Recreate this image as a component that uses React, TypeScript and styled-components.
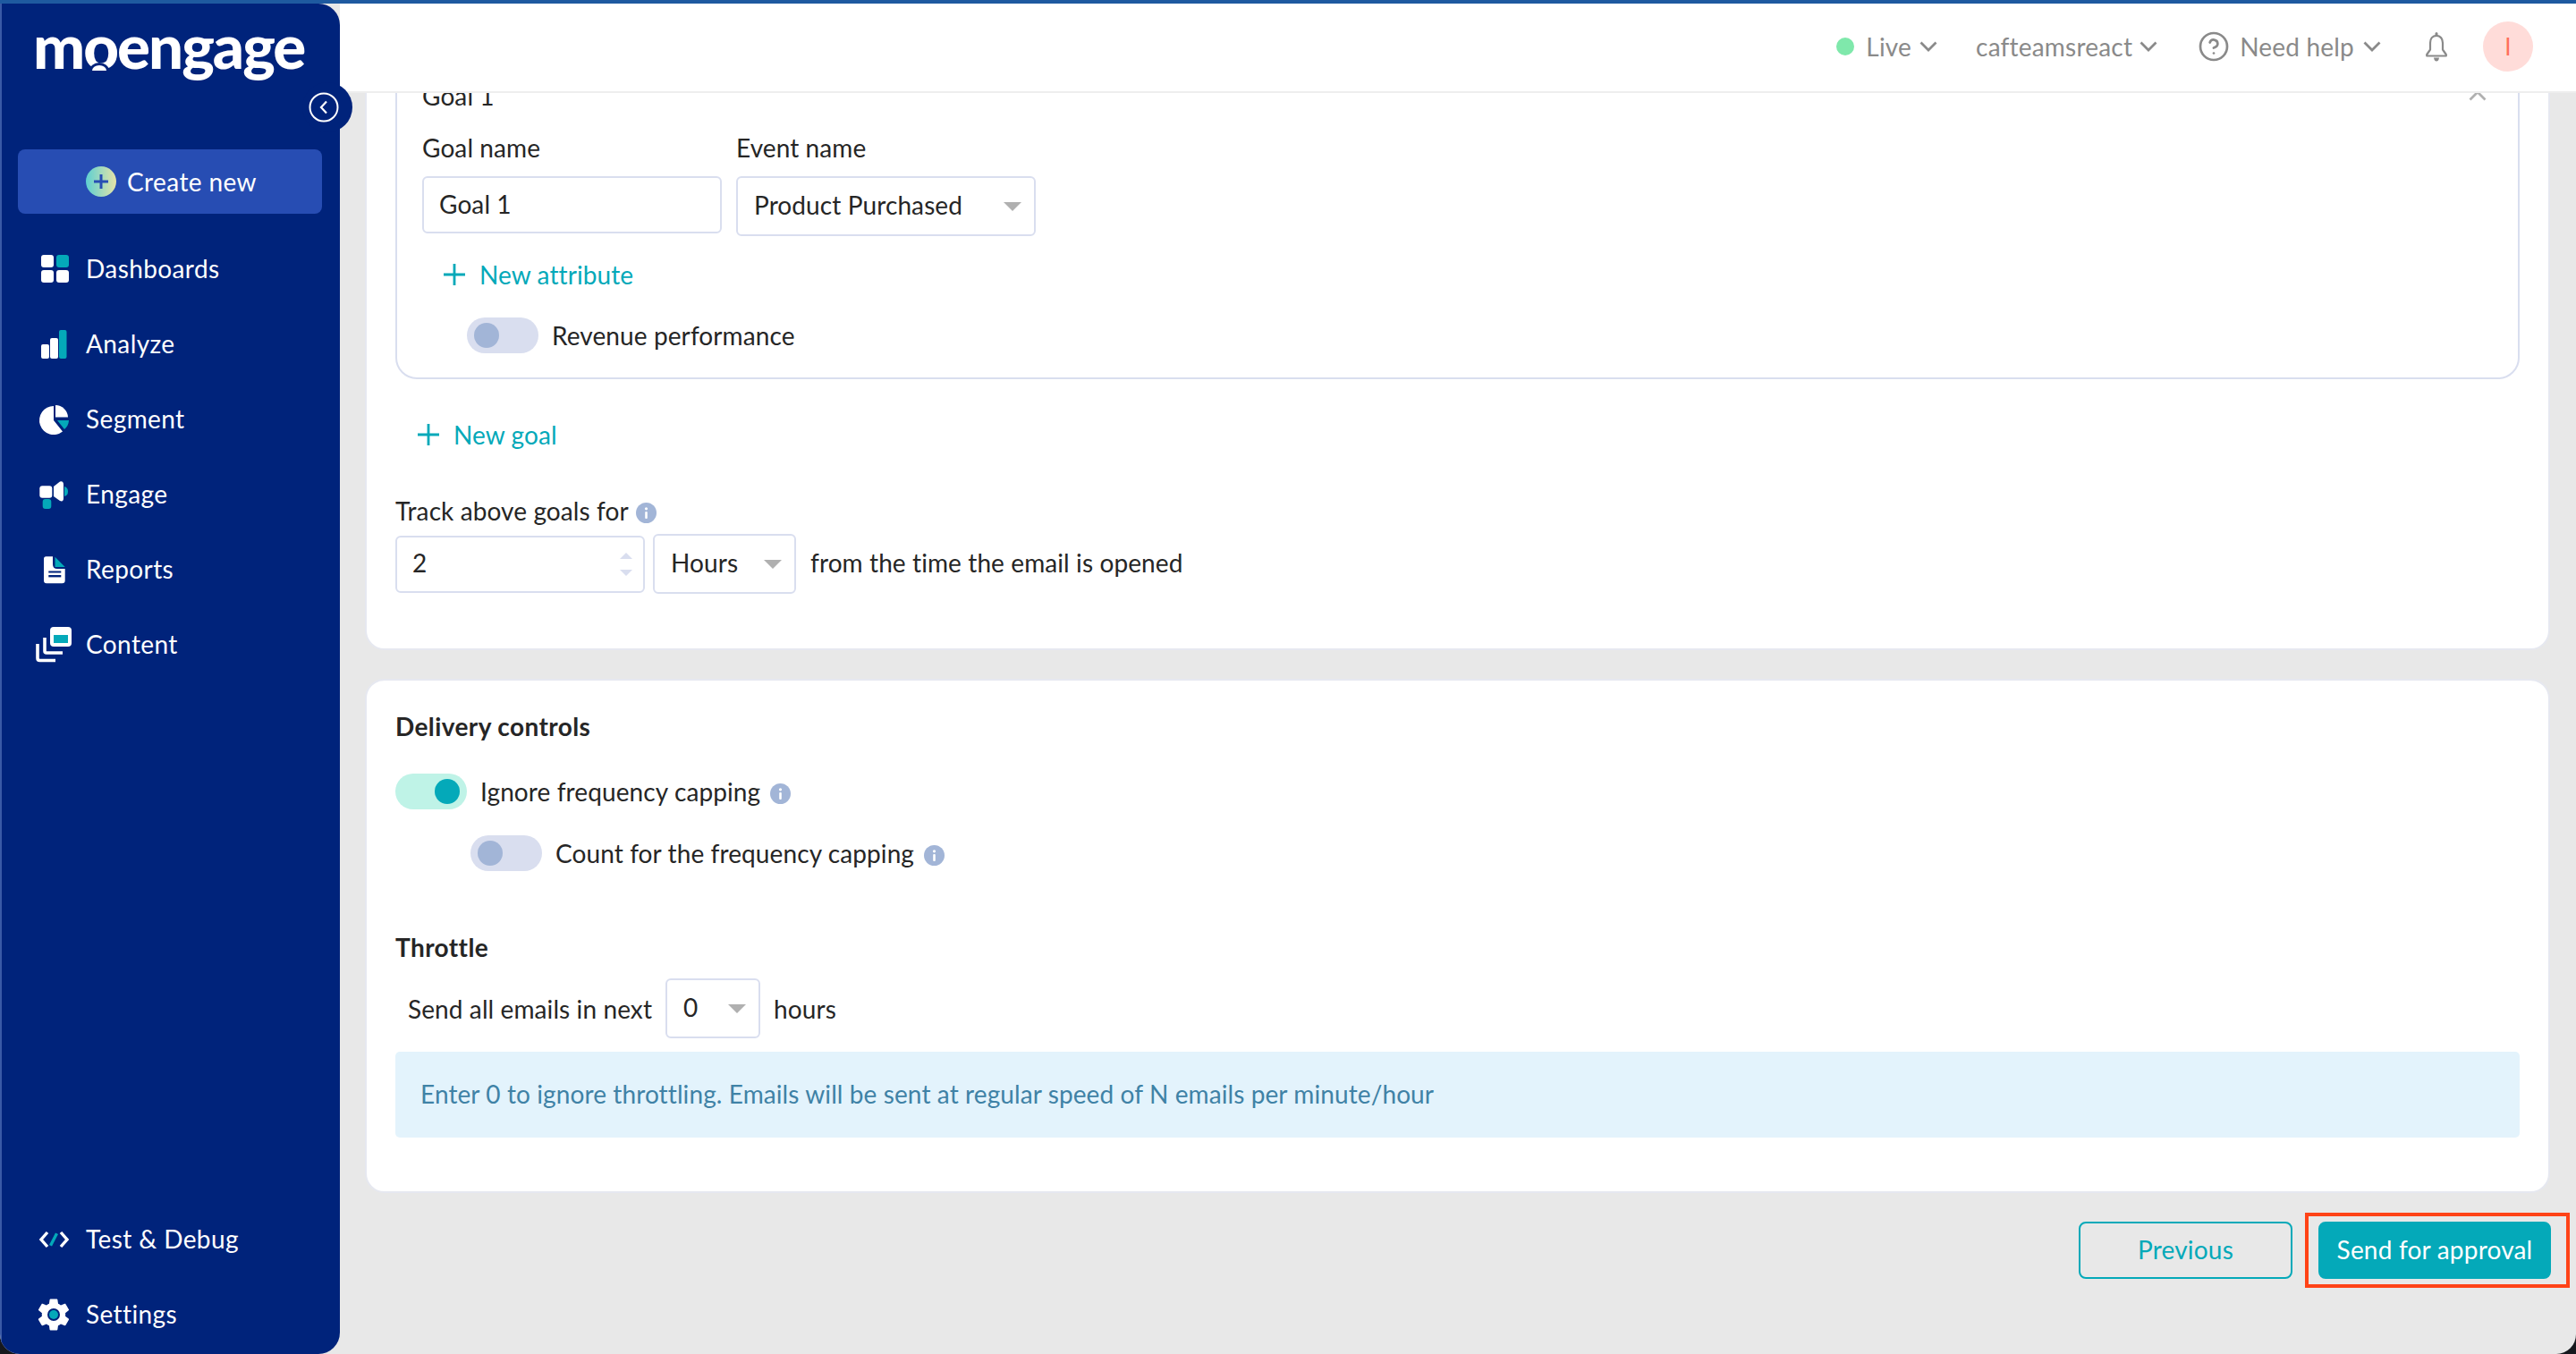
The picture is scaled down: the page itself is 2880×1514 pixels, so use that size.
import React from 'react';
import styled, { createGlobalStyle } from 'styled-components';
import { CircleHelp } from 'lucide-react';

const Global = createGlobalStyle`
  html, body { margin: 0; padding: 0; background: #16181d; }
  body { font-family: "Lato", "Liberation Sans", sans-serif; color: #262626; }
  * { box-sizing: border-box; }
`;

const teal = '#04a9b9';
const line = '#d9deef';
const navy = '#00237b';

const Shell = styled.div`
  width: 2880px; height: 1514px; display: flex; flex-direction: column;
  border-top: 4px solid #1e5aa0; overflow: hidden;
`;
const Window = styled.div`
  flex: 1; min-height: 0; display: flex; overflow: hidden;
  border-radius: 0 0 22px 22px; background: #e8e8e8;
`;
const Sidebar = styled.aside`
  width: 380px; flex: none; position: relative; z-index: 2;
  display: flex; flex-direction: column;
  background: ${navy}; border-left: 2px solid #3a5aa6;
  border-radius: 0 24px 24px 0; color: #fff; padding-bottom: 3px;
`;
const LogoArea = styled.div`
  height: 163px; flex: none; padding: 7px 0 0 35px;
`;
const Logo = styled.div`
  font-family: "Lato", sans-serif; font-weight: 900; font-size: 69px; line-height: 80px;
  letter-spacing: -2px; color: #fff; white-space: nowrap;
`;
const LogoO = styled.span`
  position: relative; display: inline-block;
  &::after {
    content: ''; position: absolute; left: 50%; margin-left: -9px; bottom: 12px; width: 16px; height: 6px;
    background: #fff; border-radius: 50% 50% 0 0 / 100% 100% 0 0;
    box-shadow: 0 0 0 3px ${navy};
  }
`;
const CollapseBump = styled.div`
  position: absolute; right: -14px; top: 88px; width: 56px; height: 56px; border-radius: 50%;
  background: ${navy}; display: flex; align-items: center; justify-content: center;
  padding-right: 8px;
`;
const CreateButton = styled.div`
  flex: none; width: 340px; height: 72px; margin-left: 18px; border-radius: 8px;
  background: #274db3; display: flex; align-items: center; justify-content: center; gap: 12px;
  font-size: 28px; letter-spacing: 0.4px; padding-left: 3px;
`;
const NavList = styled.nav<{ $bottom?: boolean }>`
  display: flex; flex-direction: column;
  margin-top: ${p => (p.$bottom ? 'auto' : '19px')};
`;
const NavRow = styled.div`
  height: 84px; display: flex; align-items: center; gap: 13px; padding-left: 37px;
  font-size: 28px; letter-spacing: 0.4px;
`;
const NavIcon = styled.svg`
  width: 44px; height: 44px; flex: none; overflow: visible;
`;

const Main = styled.main`
  flex: 1; min-width: 0; margin-left: -24px; padding-left: 24px;
  display: flex; flex-direction: column;
`;
const Header = styled.header`
  height: 100px; flex: none; background: #fff; border-bottom: 2px solid #eeeeee;
  display: flex; align-items: center; justify-content: flex-end; padding: 0 48px 2px 0;
  color: #8a8a8a; font-size: 28px; letter-spacing: 0.2px;
`;
const HeaderItem = styled.div<{ $gap?: number }>`
  display: flex; align-items: center; margin-right: ${p => p.$gap ?? 0}px;
`;
const LiveDot = styled.span`
  width: 20px; height: 20px; border-radius: 50%; background: #7fe8ab; margin-right: 13px;
`;
const HelpIcon = styled(CircleHelp)`
  margin-right: 11px;
`;
const ChevronSvg = styled.svg<{ $left?: number; $right?: number; $up?: boolean }>`
  width: 20px; height: 12px; flex: none; fill: none; stroke: currentColor; stroke-width: 2.8;
  margin-left: ${p => p.$left ?? 0}px; margin-right: ${p => p.$right ?? 0}px;
  transform: ${p => (p.$up ? 'rotate(180deg)' : 'none')};
`;
const Chevron = (p: { left?: number; right?: number; up?: boolean }) => (
  <ChevronSvg $left={p.left} $right={p.right} $up={p.up} viewBox="0 0 20 12">
    <path d="M1.5 1.5L10 10L18.5 1.5" />
  </ChevronSvg>
);
const BellSvg = styled.svg`
  width: 26px; height: 33px; flex: none;
`;
const Avatar = styled.div`
  width: 56px; height: 56px; border-radius: 50%; background: #ffdcd9; color: #ff6f5c;
  display: flex; align-items: center; justify-content: center; font-size: 26px;
`;
const Scroller = styled.div`
  flex: 1; min-height: 0; overflow: hidden; padding: 0 29px 0 28px;
`;
const Card = styled.section<{ $first?: boolean }>`
  background: #fff; border: 2px solid #e6e8f0; border-radius: 22px;
  padding: ${p => (p.$first ? '0 32px 61px 32px' : '35px 32px 60px 32px')};
  margin-top: ${p => (p.$first ? '-30px' : '32px')};
`;
const GoalBox = styled.div`
  border: 2px solid ${line}; border-radius: 24px; padding: 12px 26px 27px 28px;
`;
const GoalHead = styled.div`
  height: 34px; display: flex; align-items: center; justify-content: space-between;
  font-size: 28px; letter-spacing: 0.1px; color: #b0b0b0;
`;
const GoalTitle = styled.span`color: #262626;`;
const FieldRow = styled.div`
  display: flex; gap: 16px; margin-top: 25px; align-items: flex-start;
`;
const Field = styled.div`
  width: 335px; display: flex; flex-direction: column; gap: 14px;
`;
const Label = styled.div`
  font-size: 28px; line-height: 32px; padding-bottom: 2px; letter-spacing: 0.1px; color: #262626;
`;
const Input = styled.div<{ $width?: number }>`
  width: ${p => (p.$width ? `${p.$width}px` : '100%')}; height: 64px; flex: none;
  border: 2px solid ${line}; border-radius: 6px; background: #fff;
  display: flex; align-items: center; position: relative;
  padding: 0 0 3px 17px;
  font-size: 28px; letter-spacing: 0.1px; color: #262626;
`;
const Select = styled(Input)`
  height: 67px; padding: 0 14px 3px 18px; justify-content: space-between;
  &::after {
    content: ''; width: 0; height: 0; margin-top: 3px; border-left: 10px solid transparent;
    border-right: 10px solid transparent; border-top: 10px solid #b0b0b0;
  }
`;
const ThrottleSelect = styled(Select)`
  margin: 0 15px 0 15px;
`;
const Spinner = styled.div`
  position: absolute; right: 12px; top: 17px; display: flex; flex-direction: column; gap: 12px;
`;
const SpinArrow = styled.span<{ $down?: boolean }>`
  width: 0; height: 0; border-left: 7px solid transparent; border-right: 7px solid transparent;
  ${p => (p.$down ? `border-top: 7px solid ${line};` : `border-bottom: 7px solid ${line};`)}
`;
const AddLink = styled.div<{ $goal?: boolean }>`
  height: 34px; display: flex; align-items: center; gap: 16px; color: ${teal};
  font-size: 28px; letter-spacing: 0.1px;
  margin-top: ${p => (p.$goal ? '45px' : '26px')};
  margin-left: ${p => (p.$goal ? '25px' : '24px')};
`;
const PlusSvg = styled.svg`
  width: 24px; height: 24px; flex: none; stroke: ${teal}; stroke-width: 2.8;
`;
const PlusIcon = () => (
  <PlusSvg viewBox="0 0 24 24"><path d="M12 0V24M0 12H24" /></PlusSvg>
);
const ToggleRow = styled.div<{ $indent?: number; $top: number }>`
  display: flex; align-items: center; gap: 15px; margin-left: ${p => p.$indent ?? 0}px;
  margin-top: ${p => p.$top}px; font-size: 28px; letter-spacing: 0.1px;
`;
const Toggle = styled.span<{ $on?: boolean }>`
  width: 80px; height: 40px; border-radius: 20px; flex: none; display: flex; align-items: center;
  justify-content: ${p => (p.$on ? 'flex-end' : 'flex-start')}; padding: 0 8px;
  background: ${p => (p.$on ? '#bff3e7' : line)};
`;
const Knob = styled.span<{ $on?: boolean }>`
  width: 28px; height: 28px; border-radius: 50%;
  background: ${p => (p.$on ? teal : '#a2b5d7')};
`;
const TrackLabel = styled(Label)`
  margin-top: 52px; display: flex; align-items: center; gap: 8px;
`;
const DurationRow = styled.div`
  display: flex; align-items: center; gap: 9px; margin-top: 8px;
  font-size: 28px; letter-spacing: 0.1px;
`;
const AfterText = styled.span`
  margin-left: 7px; padding-bottom: 3px;
`;
const SectionTitle = styled.h3<{ $top?: number }>`
  margin: ${p => p.$top ?? 0}px 0 0; font-size: 28px; line-height: 32px; padding-bottom: 2px;
  font-weight: 700; letter-spacing: 0.4px; color: #262626;
`;
const ThrottleRow = styled.div`
  display: flex; align-items: center; margin-top: 17px; padding-left: 14px;
  font-size: 28px; letter-spacing: 0.1px;
`;
const Notice = styled.div`
  margin-top: 15px; height: 96px; background: #e3f3fc; border-radius: 5px;
  display: flex; align-items: center; padding: 0 28px 3px; font-size: 28px; letter-spacing: 0.1px;
  color: #3f82a6;
`;
const Footer = styled.div`
  display: flex; justify-content: flex-end; align-items: center; gap: 14px;
  margin: 22px -22px 0 0;
`;
const Btn = styled.div<{ $solid?: boolean }>`
  height: 64px; border-radius: 8px; display: flex; align-items: center; justify-content: center;
  font-size: 28px; letter-spacing: 0.2px; padding-bottom: 2px;
  width: ${p => (p.$solid ? '260px' : '239px')};
  border: 2px solid ${teal};
  background: ${p => (p.$solid ? teal : 'transparent')};
  color: ${p => (p.$solid ? '#fff' : teal)};
`;
const Highlight = styled.div`
  border: 4px solid #ff4317; padding: 6px 17px 6px 11px;
`;
const InfoGlyph = styled.svg<{ $left?: number }>`
  width: 23px; height: 23px; flex: none; margin-left: ${p => p.$left ?? 0}px; margin-top: 5px;
`;

const Info = ({ left }: { left?: number }) => (
  <InfoGlyph $left={left} viewBox="0 0 23 23">
    <circle cx="11.5" cy="11.5" r="11.5" fill="#a2b5d7" />
    <circle cx="11.5" cy="6.8" r="1.6" fill="#fff" />
    <rect x="10.2" y="10" width="2.6" height="8" rx="1" fill="#fff" />
  </InfoGlyph>
);

const A = '#ffffff';
const T = teal;

const icons: Record<string, React.ReactNode> = {
  Dashboards: (
    <>
      <rect x="7" y="7" width="14" height="14" rx="3" fill={A} />
      <rect x="24" y="7" width="14" height="14" rx="3" fill={T} />
      <rect x="7" y="24" width="14" height="14" rx="3" fill={A} />
      <rect x="24" y="24" width="14" height="14" rx="3" fill={A} />
    </>
  ),
  Analyze: (
    <>
      <rect x="7" y="23" width="9" height="16" rx="2" fill={A} />
      <rect x="17" y="16" width="9" height="23" rx="2" fill={A} />
      <rect x="27" y="7" width="8.5" height="32" rx="2" fill={T} />
    </>
  ),
  Segment: (
    <>
      <path d="M21 8A16 16 0 1 0 31 36.5L21 24Z" fill={A} />
      <path d="M23 7A14 14 0 0 1 37 20.5L23 20.5Z" fill={A} />
      <path d="M25 24L38 24A14 14 0 0 1 33 34Z" fill={T} />
    </>
  ),
  Engage: (
    <>
      <rect x="5.3" y="13.3" width="14" height="13.4" rx="3" fill={A} />
      <path d="M21 14L28 8.5Q32 7.5 32 12V27Q32 31.5 28 30L21 25Z" fill={A} />
      <path d="M33 14Q37 15 37 19.5Q37 24 33 25Z" fill={T} />
      <rect x="8.7" y="28" width="9.6" height="11" rx="3" fill={T} />
    </>
  ),
  Reports: (
    <>
      <path d="M12.5 8.3H20V17Q20 22 25 22H33.7V35Q33.7 38.3 30.5 38.3H13Q10 38.3 10 35V11Q10 8.3 12.5 8.3Z" fill={A} />
      <path d="M22.5 8.7L33.7 20H22.5Z" fill={T} />
      <rect x="15.3" y="24.5" width="14" height="2" fill={navy} />
      <rect x="15.3" y="29" width="14" height="2.4" fill={navy} />
    </>
  ),
  Content: (
    <>
      <path d="M3 22V38Q3 40.5 5.5 40.5H23" fill="none" stroke={A} strokeWidth="3.6" />
      <path d="M11 15V30Q11 32 13 32H31" fill="none" stroke={A} strokeWidth="3.6" />
      <rect x="17" y="3" width="24" height="22" rx="4" fill={A} />
      <rect x="21" y="12" width="16" height="9" fill={T} />
    </>
  ),
  'Test & Debug': (
    <>
      <path d="M14 15L7 23L14 31" fill="none" stroke={A} strokeWidth="3.4" />
      <path d="M17.5 29.7L24.5 16.3" fill="none" stroke={T} strokeWidth="3.4" />
      <path d="M29 15L36 23L29 31" fill="none" stroke={A} strokeWidth="3.4" />
    </>
  ),
  Settings: (
    <>
      <g transform="translate(-1 1) scale(1.83)">
        <path
          d="M19.14 12.94c.04-.3.06-.61.06-.94 0-.32-.02-.64-.07-.94l2.03-1.58c.18-.14.23-.41.12-.61l-1.92-3.32c-.12-.22-.37-.29-.59-.22l-2.39.96c-.5-.38-1.03-.7-1.62-.94l-.36-2.54c-.04-.24-.24-.41-.48-.41h-3.84c-.24 0-.43.17-.47.41l-.36 2.54c-.59.24-1.13.57-1.62.94l-2.39-.96c-.22-.08-.47 0-.59.22L2.74 8.87c-.12.21-.08.47.12.61l2.03 1.58c-.05.3-.09.63-.09.94s.02.64.07.94l-2.03 1.58c-.18.14-.23.41-.12.61l1.92 3.32c.12.22.37.29.59.22l2.39-.96c.5.38 1.03.7 1.62.94l.36 2.54c.05.24.24.41.48.41h3.84c.24 0 .44-.17.47-.41l.36-2.54c.59-.24 1.13-.56 1.62-.94l2.39.96c.22.08.47 0 .59-.22l1.92-3.32c.12-.22.07-.47-.12-.61l-2.01-1.58z"
          fill={A}
        />
      </g>
      <circle cx="21" cy="23" r="7" fill={navy} />
      <circle cx="21" cy="23" r="5" fill={T} />
    </>
  ),
};

const NavItem = ({ name }: { name: string }) => (
  <NavRow>
    <NavIcon viewBox="0 0 44 44">{icons[name]}</NavIcon>
    {name}
  </NavRow>
);

export default function App() {
  return (
    <>
      <Global />
      <Shell>
        <Window>
          <Sidebar>
            <LogoArea>
              <Logo>m<LogoO>o</LogoO>engage</Logo>
            </LogoArea>
            <CollapseBump>
              <svg width="34" height="34" viewBox="0 0 34 34">
                <circle cx="17" cy="17" r="15.5" fill="none" stroke="#fff" strokeWidth="2" />
                <path d="M20 10.5L14 17L20 23.5" fill="none" stroke="#fff" strokeWidth="2.2" />
              </svg>
            </CollapseBump>
            <CreateButton>
              <svg width="34" height="34" viewBox="0 0 34 34">
                <defs>
                  <linearGradient id="cg" x1="0" x2="1" y1="0" y2="0">
                    <stop offset="0" stopColor="#5dcfd2" />
                    <stop offset="1" stopColor="#e6e4a8" />
                  </linearGradient>
                </defs>
                <circle cx="17" cy="17" r="17" fill="url(#cg)" />
                <path d="M17 9V25M9 17H25" stroke="#274db3" strokeWidth="3" />
              </svg>
              Create new
            </CreateButton>
            <NavList>
              {['Dashboards', 'Analyze', 'Segment', 'Engage', 'Reports', 'Content'].map(n => (
                <NavItem key={n} name={n} />
              ))}
            </NavList>
            <NavList $bottom>
              {['Test & Debug', 'Settings'].map(n => (
                <NavItem key={n} name={n} />
              ))}
            </NavList>
          </Sidebar>
          <Main>
            <Header>
              <HeaderItem $gap={43}>
                <LiveDot />
                Live
                <Chevron left={9} />
              </HeaderItem>
              <HeaderItem $gap={45}>
                cafteamsreact
                <Chevron left={8} />
              </HeaderItem>
              <HeaderItem $gap={49}>
                <HelpIcon size={36} strokeWidth={1.8} />
                Need help
                <Chevron left={10} />
              </HeaderItem>
              <HeaderItem $gap={39}>
                <BellSvg viewBox="0 0 26 33">
                  <path d="M11.5 1.5Q11.5 0 13 0Q14.5 0 14.5 1.5V4H11.5Z" fill="#8a8a8a" />
                  <path
                    d="M13 3.8C8.5 3.8 6 7.5 6 12V19.5L2.2 25V26.5H23.8V25L20 19.5V12C20 7.5 17.5 3.8 13 3.8Z"
                    fill="none" stroke="#8a8a8a" strokeWidth="2.2" strokeLinejoin="round"
                  />
                  <path d="M10 28.5H16Q15.5 32.5 13 32.5Q10.5 32.5 10 28.5Z" fill="#8a8a8a" />
                </BellSvg>
              </HeaderItem>
              <Avatar>I</Avatar>
            </Header>
            <Scroller>
              <Card $first>
                <GoalBox>
                  <GoalHead>
                    <GoalTitle>Goal 1</GoalTitle>
                    <Chevron up right={9} />
                  </GoalHead>
                  <FieldRow>
                    <Field>
                      <Label>Goal name</Label>
                      <Input>Goal 1</Input>
                    </Field>
                    <Field>
                      <Label>Event name</Label>
                      <Select>Product Purchased</Select>
                    </Field>
                  </FieldRow>
                  <AddLink>
                    <PlusIcon />
                    New attribute
                  </AddLink>
                  <ToggleRow $indent={50} $top={31}>
                    <Toggle><Knob /></Toggle>
                    Revenue performance
                  </ToggleRow>
                </GoalBox>
                <AddLink $goal>
                  <PlusIcon />
                  New goal
                </AddLink>
                <TrackLabel>
                  Track above goals for
                  <Info />
                </TrackLabel>
                <DurationRow>
                  <Input $width={279}>
                    2
                    <Spinner>
                      <SpinArrow />
                      <SpinArrow $down />
                    </Spinner>
                  </Input>
                  <Select $width={160}>Hours</Select>
                  <AfterText>from the time the email is opened</AfterText>
                </DurationRow>
              </Card>
              <Card>
                <SectionTitle>Delivery controls</SectionTitle>
                <ToggleRow $top={35}>
                  <Toggle $on><Knob $on /></Toggle>
                  Ignore frequency capping
                  <Info left={-4} />
                </ToggleRow>
                <ToggleRow $indent={84} $top={29}>
                  <Toggle><Knob /></Toggle>
                  Count for the frequency capping
                  <Info left={-4} />
                </ToggleRow>
                <SectionTitle $top={69}>Throttle</SectionTitle>
                <ThrottleRow>
                  Send all emails in next
                  <ThrottleSelect $width={106}>0</ThrottleSelect>
                  hours
                </ThrottleRow>
                <Notice>Enter 0 to ignore throttling. Emails will be sent at regular speed of N emails per minute/hour</Notice>
              </Card>
              <Footer>
                <Btn>Previous</Btn>
                <Highlight>
                  <Btn $solid>Send for approval</Btn>
                </Highlight>
              </Footer>
            </Scroller>
          </Main>
        </Window>
      </Shell>
    </>
  );
}
